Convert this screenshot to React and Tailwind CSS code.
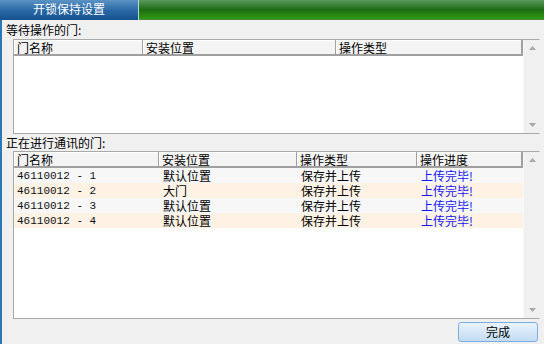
const cjk = { fontFamily: '"Noto Sans CJK SC", "Liberation Sans", sans-serif' };
const mono = { fontFamily: '"Liberation Mono", "Noto Sans CJK SC", monospace' };

const rows = [
  { name: '46110012 - 1', place: '默认位置', op: '保存并上传', state: '上传完毕!' },
  { name: '46110012 - 2', place: '大门', op: '保存并上传', state: '上传完毕!' },
  { name: '46110012 - 3', place: '默认位置', op: '保存并上传', state: '上传完毕!' },
  { name: '46110012 - 4', place: '默认位置', op: '保存并上传', state: '上传完毕!' },
];

function ScrollBar() {
  return (
    <div className="flex w-[17px] shrink-0 flex-col items-center justify-between border-l border-[#f7f7f7] bg-[#f0f0f0] py-[6px]">
      <svg width="7" height="4" viewBox="0 0 7 4">
        <path d="M0 4 L3.5 0 L7 4 Z" fill="#a8a8a8" />
      </svg>
      <svg width="7" height="4" viewBox="0 0 7 4">
        <path d="M0 0 L3.5 4 L7 0 Z" fill="#a8a8a8" />
      </svg>
    </div>
  );
}

function HeadCell({ width, children, last }) {
  return (
    <div
      className={`flex h-[16px] shrink-0 items-center border-b-2 border-r border-b-[#a0a0a0] border-r-[#a0a0a0] bg-[#f4f4f4] pl-[3px] pt-[1px] text-[12px] leading-[14px] text-black shadow-[inset_1px_1px_0_#ffffff] ${last ? 'border-r-2 border-r-[#808080]' : ''}`}
      style={{ width }}
    >
      {children}
    </div>
  );
}

export default function App() {
  return (
    <div className="flex h-[344px] w-[544px] flex-col overflow-hidden bg-[#f0f0f0]" style={cjk}>
      {/* title bar */}
      <div className="flex h-[20px] shrink-0">
        <div className="flex w-[138px] items-center justify-center bg-gradient-to-b from-[#5c93c4] via-[#2a6aa8] to-[#14528e] pb-[2px] text-[12px] leading-[14px] text-white">
          开锁保持设置
        </div>
        <div className="w-px bg-[#b9d3e6]" />
        <div className="flex-1 border-b border-[#4f8a3a] bg-gradient-to-b from-[#5a9a5e] via-[#1e6c12] to-[#2e9a12]" />
      </div>

      <div className="flex flex-1 flex-col border-l-2 border-[#2c78b6] pl-[4px] pr-[4px]">
        <div className="flex h-[19px] shrink-0 items-center pt-[1px] text-[12px] leading-[14px] text-black">等待操作的门:</div>

        <div className="ml-[7px] flex h-[95px] shrink-0 border border-[#a8a8a8] border-r-[#e8e8e8] bg-white">
          <div className="flex flex-1 flex-col">
            <div className="flex">
              <HeadCell width={129}>门名称</HeadCell>
              <HeadCell width={193}>安装位置</HeadCell>
              <HeadCell width={187} last>操作类型</HeadCell>
            </div>
          </div>
          <ScrollBar />
        </div>

        <div className="flex h-[17px] shrink-0 items-center pt-[1px] text-[12px] leading-[14px] text-black">正在进行通讯的门:</div>

        <div className="ml-[7px] flex h-[168px] shrink-0 border border-[#a8a8a8] border-r-[#e8e8e8] bg-white">
          <div className="flex flex-1 flex-col">
            <div className="flex">
              <HeadCell width={145}>门名称</HeadCell>
              <HeadCell width={138}>安装位置</HeadCell>
              <HeadCell width={120}>操作类型</HeadCell>
              <HeadCell width={106} last>操作进度</HeadCell>
            </div>
            {rows.map((r, i) => (
              <div
                key={r.name}
                className={`flex h-[15px] items-center text-[12px] leading-[14px] ${i % 2 === 0 ? 'bg-[#f7f7f7]' : 'bg-[#fdf2e4]'}`}
              >
                <div className="w-[145px] shrink-0 pl-[3px] text-[11px] leading-[14px] text-[#111]" style={mono}>{r.name}</div>
                <div className="w-[138px] shrink-0 pl-[4px] text-black">{r.place}</div>
                <div className="w-[120px] shrink-0 pl-[4px] text-black">{r.op}</div>
                <div className="w-[106px] shrink-0 pl-[4px] text-[#1616f0]">{r.state}</div>
              </div>
            ))}
          </div>
          <ScrollBar />
        </div>

        <div className="flex flex-1 items-center justify-end pr-[2px]">
          <button className="flex h-[20px] w-[80px] items-center justify-center rounded-[3px] border border-[#7aaee0] bg-gradient-to-b from-[#eaf4fc] to-[#c2dcf2] text-[12px] leading-[14px] text-black">
            完成
          </button>
        </div>
      </div>
    </div>
  );
}
